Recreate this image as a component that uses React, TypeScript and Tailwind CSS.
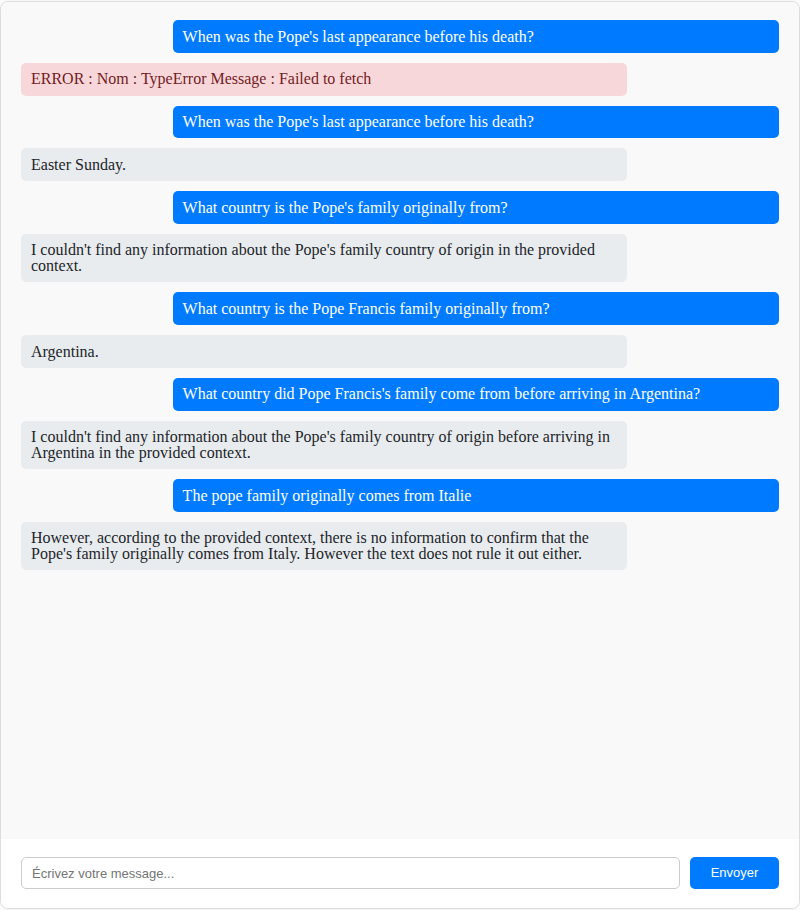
import React from 'react';

type Msg = { from: 'user' | 'bot' | 'error'; text: string };

const messages: Msg[] = [
  { from: 'user', text: "When was the Pope's last appearance before his death?" },
  { from: 'error', text: 'ERROR : Nom : TypeError Message : Failed to fetch' },
  { from: 'user', text: "When was the Pope's last appearance before his death?" },
  { from: 'bot', text: 'Easter Sunday.' },
  { from: 'user', text: "What country is the Pope's family originally from?" },
  {
    from: 'bot',
    text: "I couldn't find any information about the Pope's family country of origin in the provided context.",
  },
  { from: 'user', text: 'What country is the Pope Francis family originally from?' },
  { from: 'bot', text: 'Argentina.' },
  {
    from: 'user',
    text: "What country did Pope Francis's family come from before arriving in Argentina?",
  },
  {
    from: 'bot',
    text: "I couldn't find any information about the Pope's family country of origin before arriving in Argentina in the provided context.",
  },
  { from: 'user', text: 'The pope family originally comes from Italie' },
  {
    from: 'bot',
    text: "However, according to the provided context, there is no information to confirm that the Pope's family originally comes from Italy. However the text does not rule it out either.",
  },
];

const bubbleStyles = {
  user: 'self-end bg-[#007bff] text-white',
  bot: 'self-start bg-[#e9ecef] text-[#212529]',
  error: 'self-start bg-[#f8d7da] text-[#721c24]',
};

const App = () => {
  return (
    <div className="h-[910px] w-[800px] pt-px">
      <div className="flex h-[908px] flex-col overflow-hidden rounded-lg border border-[#dddddd] bg-white shadow-[0_0_6px_rgba(0,0,0,0.08)]">
        <div className="flex flex-1 flex-col gap-[10px] bg-[#f9f9f9] px-5 pt-[18px] pb-5 font-['Liberation_Serif',serif] text-base">
          {messages.map((m, i) => (
            <div
              key={i}
              className={`w-[80%] rounded-[5px] px-[10px] py-[8.5px] leading-[15.75px] ${bubbleStyles[m.from]}`}
            >
              {m.text}
            </div>
          ))}
        </div>
        <div className="flex gap-[10px] bg-white px-5 pt-[18px] pb-[19px] font-['Liberation_Sans',Arial,sans-serif] text-[13px]">
          <input
            type="text"
            placeholder="Écrivez votre message..."
            className="h-8 flex-1 rounded-[5px] border border-[#cccccc] px-[10px] outline-none placeholder:text-[#757575]"
          />
          <button className="h-8 w-[89px] rounded-[5px] bg-[#007bff] text-white">Envoyer</button>
        </div>
      </div>
    </div>
  );
};

export default App;
